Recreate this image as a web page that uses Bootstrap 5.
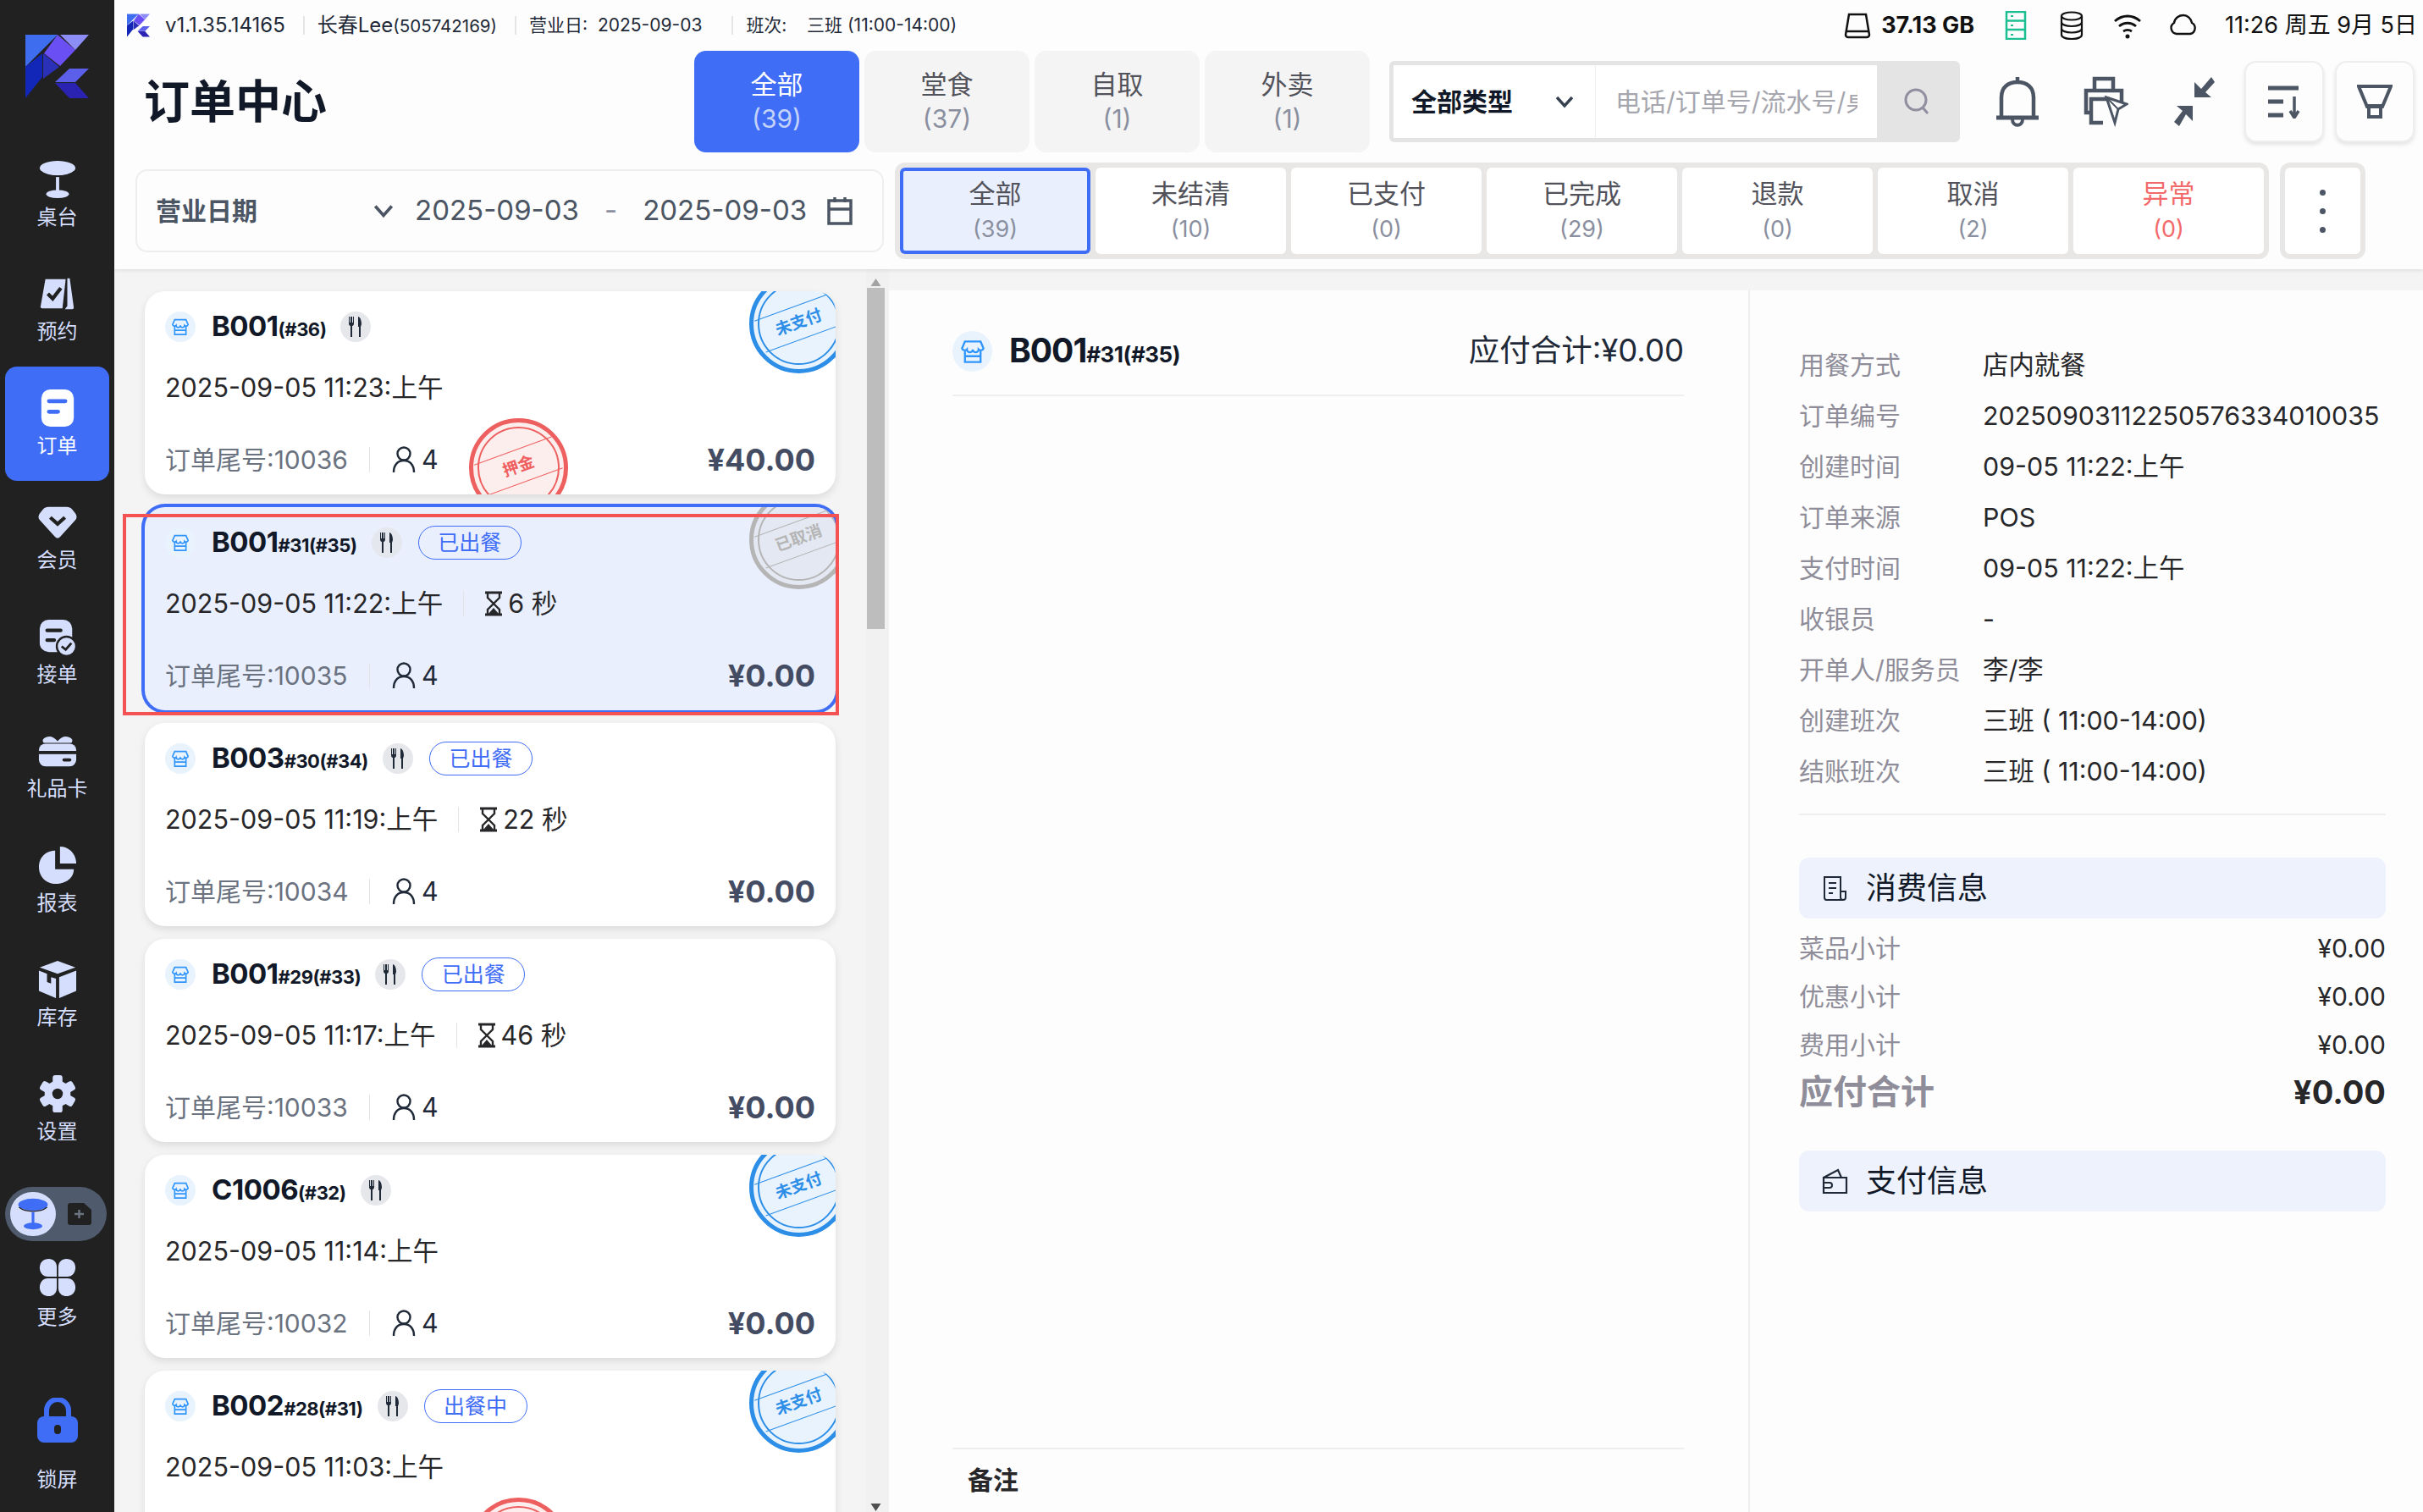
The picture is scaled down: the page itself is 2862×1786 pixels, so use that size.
<!DOCTYPE html>
<html lang="zh-CN">
<head>
<meta charset="UTF-8">
<title>订单中心</title>
<link href="https://cdn.jsdelivr.net/npm/bootstrap@5.3.0/dist/css/bootstrap.min.css" rel="stylesheet">
<style>
html, body { height: 1786px; }
body { width: 2862px; overflow: hidden; background: #f4f4f4; font-family: Inter, "Noto Sans CJK SC", sans-serif; color: #27272a; }

/* left rail */
.rail { width: 135px; height: 1786px; background: #212121; color: #d5defc; flex: none; padding-top: 41px; }
.rail-logo { width: 75px; height: 75px; margin: 0 0 47px 30px; display: block; }
.rail-item { width: 123px; height: 135px; margin-left: 6px; border-radius: 14px; padding-top: 26px; font-size: 24px; line-height: 30px; }
.rail-item svg { width: 46px; height: 46px; display: block; margin-bottom: 7px; flex: none; }
.rail-item.is-on { background: #3f6df6; color: #fff; }
.rail-switch { width: 120px; height: 64px; margin: 24px 0 0 6px; border-radius: 32px; background: #4f5b6d; padding: 6px; }
.rail-knob { width: 54px; height: 52px; border-radius: 26px; background: #d5defc; color: #3f6df6; }
.rail-knob svg { width: 38px; height: 38px; }
.rail-doc { width: 30px; height: 28px; margin-left: 13px; }
.rail-item.is-more { height: 107px; padding-top: 20px; }
.rail-item.is-more svg { margin-bottom: 9px; }
.rail-lock { padding-top: 0; margin-top: 78px; color: #3f6df6; height: auto; }
.rail-item.rail-lock svg { width: 52px; height: 54px; margin-bottom: 28px; }
.rail-lock span { color: #d5defc; }

/* header */
.top-area { background: #fdfdfd; height: 318px; box-shadow: 0 2px 4px rgba(0,0,0,.08); position: relative; z-index: 2; }
.status-strip { height: 60px; padding: 0 7px 0 15px; font-size: 21px; color: #1f2937; white-space: nowrap; }
.status-strip .logo-mini { width: 27px; height: 28px; margin-right: 18px; }
.strip-sep { width: 2px; height: 22px; background: #e5e5e5; margin: 0 15px 0 21px; }
.strip-big { font-size: 24px; }
.strip-tiny { font-size: 20.5px; }
.strip-date { margin-right: 14px; }
.strip-right { font-size: 27px; color: #111; }
.strip-right svg { height: 34px; width: 34px; }
.strip-disk { font-weight: 700; margin-left: 11px; }
.strip-gap { margin-left: 32px; }
.tool-row { height: 120px; padding-left: 25px; }
.page-title { width: 660px; padding: 2px 0 0 10px; font-size: 54px; font-weight: 700; color: #111827; line-height: 1; }
.kind-tab { width: 195px; height: 120px; margin-right: 6px; padding: 0; border: 0; border-radius: 14px; background: #f4f4f4; color: #52525b; font-size: 31px; line-height: 41px; }
.kind-tab small { display: block; font-size: 30px; color: #8a8f9f; }
.kind-tab.is-on { background: #3f6df6; color: #fff; }
.kind-tab.is-on small { color: #c5d3fb; }
.search-box { width: 674px; height: 96px; margin-left: 17px; border: 5px solid #e5e4e4; border-radius: 6px; background: #fff; flex-wrap: nowrap; }
.search-kind { width: 239px; padding: 0 0 0 21px; border: 0; border-right: 1px solid #eee; border-radius: 0; background: #fff; font-size: 30px; font-weight: 700; color: #111827; }
.search-kind svg { width: 24px; height: 24px; margin-right: 24px; color: #374151; }
.search-field { padding: 0 24px; border: 0; border-radius: 0; font-size: 30px; color: #333; background: #fff; box-shadow: none; }
.search-field::placeholder { color: #a6a6ae; }
.search-go { width: 93px; border: 0; padding: 0; border-radius: 0; background: #e5e4e4; color: #8f8fa0; }
.search-go svg { width: 36px; height: 36px; }
.tool-icon { width: 104px; color: #4b5563; }
.tool-icon svg { width: 54px; height: 62px; }
.tool-square { width: 94px; height: 96px; padding: 0; background: #fdfdfd; border: 2px solid #eee; border-radius: 14px; box-shadow: 0 3px 5px rgba(0,0,0,.1); color: #4b5563; }
.tool-square svg { width: 42px; height: 40px; }
.tool-gap { margin-left: 13px; }
.tool-icon + .tool-gap { margin-left: 8px; }
.filter-row { margin-top: 12px; padding-left: 25px; height: 114px; }
.date-box { width: 884px; height: 98px; border: 2px solid #eeeeee; border-radius: 14px; padding: 0 22px 0 22px; color: #4b5563; font-size: 33px; margin-right: 13px; white-space: nowrap; }
.date-box b { width: 256px; font-size: 30px; font-weight: 700; flex: none; }
.date-box .date-arrow { width: 26px; height: 26px; margin-right: 24px; flex: none; }
.date-box .date-cal { width: 34px; height: 34px; margin-left: 22px; flex: none; }
.date-dash { margin: 0 30px; color: #8a8f9f; }
.state-wrap { height: 114px; padding: 6px; gap: 6px; border-radius: 12px; background: #e8e7e6; }
.state-tab { width: 225px; height: 102px; padding: 2px 0 0; border: 0; border-radius: 6px; background: #fff; font-size: 31px; line-height: 42px; color: #52525b; }
.state-tab small { display: block; font-size: 27px; color: #8a8f9f; }
.state-tab.is-on { background: #e9effd; box-shadow: inset 0 0 0 4px #3f6df6; }
.state-tab.is-bad, .state-tab.is-bad small { color: #f36a6a; }
.state-more { margin-left: 13px; padding: 6px; background: #e8e7e6; border-radius: 12px; width: 101px; }
.state-more span { border-radius: 6px; background: #fff; height: 102px; }
.state-more i { display: block; width: 7px; height: 7px; border-radius: 50%; background: #4b5563; margin: 7.5px 0; }

/* order list */
.lower-area { height: 1468px; overflow: hidden; }
.order-col { width: 888px; padding: 26px 36px 0 36px; }
.order-tile { height: 240px; margin-bottom: 15px; border: 0; border-radius: 24px; box-shadow: 0 4px 10px rgba(0,0,0,.1); padding: 24px; background: #fff; overflow: hidden; font-size: 30.5px; }
.tile-wrap { position: relative; }
.order-tile.is-picked { background: #e9effd; box-shadow: 0 0 0 4px #3f6df6; }
.red-frame { position: absolute; left: -26px; top: 8px; width: 846px; height: 238px; border: 4px solid #f55353; z-index: 3; pointer-events: none; }
.tile-head { height: 36px; }
.shop-dot { width: 36px; height: 36px; border-radius: 50%; background: #e8f3fe; color: #3095fb; margin-right: 19px; }
.shop-dot svg { width: 20px; height: 22px; }
.tile-no { font-size: 33px; font-weight: 700; color: #111827; letter-spacing: -.5px; white-space: nowrap; }
.tile-no small { font-size: 22px; font-weight: 700; letter-spacing: -.5px; }
.fork-dot { width: 36px; height: 36px; border-radius: 50%; background: #e5e7eb; color: #1f2937; margin-left: 17px; flex: none; }
.fork-dot svg { width: 20px; height: 26px; }
.is-picked .fork-dot { background: #e5e7ee; }
.meal-chip { height: 40px; width: 122px; margin-left: 19px; border: 1.5px solid #3f6df6; border-radius: 20px; color: #3f6df6; font-size: 25px; line-height: 1; }
.tile-time { margin-top: 34px; height: 40px; line-height: 40px; color: #27272a; white-space: nowrap; }
.tile-sep { width: 1px; height: 30px; background: #e3e4e8; margin: 0 26px 0 26px; }
.tile-time .tile-sep { margin: 0 23px 0 24px; }
.tile-time svg { width: 24px; height: 30px; margin-right: 5px; }
.tile-foot { margin-top: 45px; height: 40px; line-height: 40px; }
.tile-tail { color: #6b7280; width: 215px; white-space: nowrap; font-size: 30px; }
.tile-people { color: #1f2937; }
.tile-people svg { width: 28px; height: 32px; margin-right: 7px; }
.tile-sum { font-size: 36px; font-weight: 700; color: #444c64; margin-left: auto; white-space: nowrap; }

/* stamps */
.stamp { position: absolute; width: 117px; height: 117px; border-radius: 50%; border: 5px solid; background: var(--stamp-bg); color: var(--stamp-ink); border-color: var(--stamp-ink); left: 714px; top: -20px; }
.stamp::before { content: ""; position: absolute; inset: 5px; border: 2px solid var(--stamp-ink); border-radius: 50%; }
.stamp span { position: absolute; left: 5px; top: 32px; width: 97px; height: 40px; line-height: 37px; transform: rotate(-20deg); border-top: 1.5px solid var(--stamp-ink); border-bottom: 1.5px solid var(--stamp-ink); text-align: center; font-size: 19px; font-weight: 700; }
.stamp-blue { --stamp-ink: #2d8ee8; --stamp-bg: #e8f3fd; }
.stamp-red { --stamp-ink: #ee5f5f; --stamp-bg: #fdeeee; left: 383px; top: 150px; }
.stamp-grey { --stamp-ink: #b5b5b5; --stamp-bg: #e4e8f2; }

/* scrollbar */
.rail-scroll { width: 27px; background: #f1f1f1; padding: 10px 0 0 1px; }
.rail-scroll svg { width: 21px; height: 12px; display: block; color: #a3a3a3; }
.rail-thumb { width: 21px; height: 403px; background: #bdbdbd; }
.rail-scroll .rail-down { margin-top: auto; color: #505050; }

/* detail */
.detail-col { width: 1015px; margin-top: 25px; padding: 0 76px 0 75px; background: #fdfdfd; }
.detail-head { height: 125px; padding-top: 20px; border-bottom: 2px solid #eeeeee; }
.detail-dot { width: 47px; height: 48px; border-radius: 50%; background: #e8f3fe; color: #3095fb; margin-right: 20px; }
.detail-dot svg { width: 28px; height: 30px; }
.detail-no { font-size: 39px; font-weight: 700; color: #111827; letter-spacing: -1px; }
.detail-no small { font-size: 26px; font-weight: 700; letter-spacing: -.5px; }
.detail-due { font-size: 36.5px; color: #1f2937; margin-left: auto; }
.detail-note { margin-top: auto; height: 76px; border-top: 2px solid #eeeeee; padding-left: 18px; font-size: 30px; font-weight: 700; color: #27272a; line-height: 72px; }

/* info */
.info-col { width: 797px; margin-top: 25px; padding: 58px 44px 0 58px; background: #fdfdfd; border-left: 2px solid #eeeeee; }
.info-line { height: 60px; font-size: 30.4px; line-height: 60px; white-space: nowrap; }
.info-line span:first-child { width: 217px; color: #8f8d99; font-size: 30px; }
.info-line span:last-child { color: #27272a; }
.info-rule { height: 2px; background: #eeeeee; margin: 20px 0 50px; }
.info-band { height: 72px; border-radius: 12px; background: #eef2fd; padding-left: 26px; font-size: 36px; color: #111827; }
.info-band svg { width: 33px; height: 33px; margin-right: 20px; }
.sum-line { height: 57px; font-size: 30px; color: #27272a; }
.sum-line span:first-child { color: #8f8d99; }
.sum-first { margin-top: 7px; }
.sum-total { height: 54px; font-size: 38px; font-weight: 700; margin-bottom: 42px; }
.sum-total span:first-child { font-size: 40px; }
</style>
</head>
<body class="d-flex">

<!-- icon sprite -->
<svg width="0" height="0" class="position-absolute">
  <defs>
    <symbol id="i-logo" viewBox="0 0 75 75">
      <polygon points="0,0 38,0 0,38" fill="#3f6df0"/>
      <polygon points="22,22 38,0 59,18 41,37" fill="#6a4ff5"/>
      <polygon points="41,0 75,0 59,18" fill="#8d8df8"/>
      <polygon points="0,38 20,22 20,50 0,75" fill="#1227b8"/>
      <polygon points="21,22 40,38 21,52" fill="#2b30b8"/>
      <polygon points="52,40 75,40 59,56 35,56" fill="#5b5fea"/>
      <polygon points="35,57 59,57 75,75 52,75" fill="#2a22b0"/>
    </symbol>
    <symbol id="i-table" viewBox="0 0 48 48">
      <ellipse cx="24" cy="10" rx="22" ry="9" fill="currentColor"/>
      <path d="M3 14c5 4 13 6 21 6s16-2 21-6" fill="none" stroke="#212121" stroke-width="1.5"/>
      <rect x="22" y="21" width="4" height="17" fill="currentColor"/>
      <ellipse cx="24" cy="42" rx="14" ry="5" fill="currentColor"/>
    </symbol>
    <symbol id="i-book" viewBox="0 0 48 48">
      <path d="M7 4h25l-4 36H3a2 2 0 0 1-2-2z" fill="currentColor" transform="translate(2 2)"/>
      <path d="M36 5h3l5 36a2 2 0 0 1-2 2h-9l3-4z" fill="currentColor"/>
      <path d="M12 24l6 6 10-13" fill="none" stroke="#212121" stroke-width="4.5"/>
    </symbol>
    <symbol id="i-order" viewBox="0 0 48 48">
      <rect x="4" y="1" width="40" height="46" rx="11" fill="#fff"/>
      <rect x="11" y="13" width="25" height="5" rx="2.5" fill="#3f6df6"/>
      <rect x="11" y="26" width="16" height="5" rx="2.5" fill="#3f6df6"/>
    </symbol>
    <symbol id="i-member" viewBox="0 0 48 48">
      <path d="M13 5h22c3 0 5 1 7 3l4 5c2 3 2 6 0 8L27 42c-2 2-4 2-6 0L2 21c-2-2-2-5 0-8l4-5c2-2 4-3 7-3z" fill="currentColor"/>
      <path d="M15 18l9 8 9-8" fill="none" stroke="#212121" stroke-width="4.5"/>
    </symbol>
    <symbol id="i-take" viewBox="0 0 48 48">
      <rect x="2" y="3" width="40" height="40" rx="11" fill="currentColor"/>
      <rect x="9" y="14" width="21" height="4.5" rx="2" fill="#212121"/>
      <rect x="9" y="26" width="13" height="4.5" rx="2" fill="#212121"/>
      <circle cx="35" cy="36" r="12" fill="currentColor" stroke="#212121" stroke-width="2.5"/>
      <path d="M29 36l5 4 7-8" fill="none" stroke="#212121" stroke-width="3"/>
    </symbol>
    <symbol id="i-gift" viewBox="0 0 48 48">
      <path d="M10 7c5-2 10 0 14 5 4-5 9-7 14-5 5 2 5 5 3 7h-34c-2-2-2-5 3-7z" fill="currentColor"/>
      <rect x="1" y="15" width="46" height="28" rx="8" fill="currentColor"/>
      <rect x="1" y="24" width="46" height="4" fill="#212121"/>
      <rect x="30" y="33" width="11" height="4" rx="2" fill="#212121"/>
    </symbol>
    <symbol id="i-pie" viewBox="0 0 48 48">
      <path d="M21 6v23h23c0 11-10 18-22 18C10 47 1 38 1 26S10 6 21 6z" fill="currentColor"/>
      <path d="M27 1c11 0 20 9 20 21H27z" fill="currentColor"/>
    </symbol>
    <symbol id="i-box" viewBox="0 0 48 48">
      <path d="M24 1l22 8-22 8L2 9z" fill="currentColor"/>
      <path d="M1 13l10 4v10l5 2v-8l6 2v24L1 38z" fill="currentColor"/>
      <path d="M47 13L26 21v26l21-9z" fill="currentColor"/>
    </symbol>
    <symbol id="i-gear" viewBox="-24 -24 48 48">
      <g fill="currentColor">
        <circle r="16"/>
        <rect x="-6" y="-23" width="12" height="46" rx="3"/>
        <rect x="-6" y="-23" width="12" height="46" rx="3" transform="rotate(60)"/>
        <rect x="-6" y="-23" width="12" height="46" rx="3" transform="rotate(120)"/>
      </g>
      <circle r="6.5" fill="#212121"/>
    </symbol>
    <symbol id="i-clover" viewBox="0 0 48 48">
      <g fill="currentColor">
        <path d="M2 12C2 5 7 1 13 1s10 4 10 10v12H12C6 23 2 18 2 12z"/>
        <path d="M46 12c0-7-5-11-11-11S25 5 25 11v12h11c6 0 10-5 10-11z"/>
        <path d="M2 36c0 7 5 11 11 11s10-4 10-10V25H12C6 25 2 30 2 36z"/>
        <path d="M46 36c0 7-5 11-11 11s-10-4-10-10V25h11c6 0 10 5 10 11z"/>
      </g>
    </symbol>
    <symbol id="i-lock" viewBox="0 0 50 54">
      <path d="M12 24v-9a13 13 0 0 1 26 0v9" fill="none" stroke="currentColor" stroke-width="6"/>
      <rect x="1" y="22" width="48" height="31" rx="8" fill="currentColor"/>
      <rect x="21" y="32" width="8" height="11" rx="4" fill="#212121"/>
    </symbol>
    <symbol id="i-shop" viewBox="0 0 24 26">
      <path d="M4 3h16l3 7a3 3 0 0 1-5 1 3 3 0 0 1-6 0 3 3 0 0 1-6 0 3 3 0 0 1-5-1z" fill="none" stroke="currentColor" stroke-width="2"/>
      <path d="M4 13v11h16V13M4 18h16" fill="none" stroke="currentColor" stroke-width="2"/>
    </symbol>
    <symbol id="i-fork" viewBox="0 0 20 26">
      <path d="M2 1v8c0 2 1 3 2 3v13h2V12c1 0 2-1 2-3V1H7v7H6V1H4v7H3V1z" fill="currentColor"/>
      <path d="M13 1c3 1 4 5 4 9l-1 3v12h-2V13h-1z" fill="currentColor"/>
    </symbol>
    <symbol id="i-user" viewBox="0 0 28 32">
      <circle cx="14" cy="9" r="7.5" fill="none" stroke="currentColor" stroke-width="2.4"/>
      <path d="M2 31c0-9 5-14 12-14s12 5 12 14" fill="none" stroke="currentColor" stroke-width="2.4"/>
    </symbol>
    <symbol id="i-glass" viewBox="0 0 24 30">
      <path d="M2 2h20M2 28h20" stroke="currentColor" stroke-width="3"/>
      <path d="M5 2v6l7 7-7 7v6M19 2v6l-7 7 7 7v6" fill="none" stroke="currentColor" stroke-width="2.4"/>
      <path d="M6 27l6-7 6 7z" fill="currentColor"/>
    </symbol>
    <symbol id="i-chev" viewBox="0 0 24 24">
      <path d="M3 7l9 10 9-10" fill="none" stroke="currentColor" stroke-width="3.4"/>
    </symbol>
  </defs>
</svg>

<!-- left rail -->
<aside class="rail d-flex flex-column">
  <svg class="rail-logo"><use href="#i-logo"/></svg>
  <div class="rail-item d-flex flex-column align-items-center"><svg><use href="#i-table"/></svg><span>桌台</span></div>
  <div class="rail-item d-flex flex-column align-items-center"><svg><use href="#i-book"/></svg><span>预约</span></div>
  <div class="rail-item is-on d-flex flex-column align-items-center"><svg><use href="#i-order"/></svg><span>订单</span></div>
  <div class="rail-item d-flex flex-column align-items-center"><svg><use href="#i-member"/></svg><span>会员</span></div>
  <div class="rail-item d-flex flex-column align-items-center"><svg><use href="#i-take"/></svg><span>接单</span></div>
  <div class="rail-item d-flex flex-column align-items-center"><svg><use href="#i-gift"/></svg><span>礼品卡</span></div>
  <div class="rail-item d-flex flex-column align-items-center"><svg><use href="#i-pie"/></svg><span>报表</span></div>
  <div class="rail-item d-flex flex-column align-items-center"><svg><use href="#i-box"/></svg><span>库存</span></div>
  <div class="rail-item d-flex flex-column align-items-center"><svg><use href="#i-gear"/></svg><span>设置</span></div>
  <div class="rail-switch d-flex align-items-center">
    <div class="rail-knob d-flex align-items-center justify-content-center"><svg><use href="#i-table"/></svg></div>
    <svg class="rail-doc" viewBox="0 0 30 28"><path d="M4 1h16l9 8v15a3 3 0 0 1-3 3H4a3 3 0 0 1-3-3V4a3 3 0 0 1 3-3z" fill="#212121"/><path d="M9 14h11M14.500 9v10" stroke="#6b7280" stroke-width="2.500"/></svg>
  </div>
  <div class="rail-item is-more d-flex flex-column align-items-center"><svg><use href="#i-clover"/></svg><span>更多</span></div>
  <div class="rail-item rail-lock d-flex flex-column align-items-center"><svg><use href="#i-lock"/></svg><span>锁屏</span></div>
</aside>

<div class="flex-grow-1 d-flex flex-column">

  <!-- header -->
  <header class="top-area">
    <div class="status-strip d-flex align-items-center">
      <svg class="logo-mini"><use href="#i-logo"/></svg>
      <span class="strip-big">v1.1.35.14165</span><i class="strip-sep"></i>
      <span class="strip-big">长春Lee<span class="strip-tiny">(505742169)</span></span><i class="strip-sep"></i>
      <span class="strip-date">营业日:&nbsp;&nbsp;2025-09-03</span><i class="strip-sep"></i>
      <span>班次:&nbsp;&nbsp;&nbsp;&nbsp;三班 (11:00-14:00)</span>
      <div class="strip-right ms-auto d-flex align-items-center">
        <svg viewBox="0 0 34 34"><path d="M7 4h20l4 24a3 3 0 0 1-3 3H6a3 3 0 0 1-3-3z" fill="none" stroke="#111" stroke-width="2.500"/><path d="M3 24h28" stroke="#111" stroke-width="2.500"/></svg>
        <span class="strip-disk">37.13 GB</span>
        <svg class="strip-gap" viewBox="0 0 34 34"><rect x="6" y="1" width="22" height="32" fill="none" stroke="#1cbf91" stroke-width="2.500"/><path d="M6 11.500h22M6 22h22" stroke="#1cbf91" stroke-width="2.500"/><path d="M11 6h3M11 17h3M11 28h3" stroke="#1cbf91" stroke-width="2"/></svg>
        <svg class="strip-gap" viewBox="0 0 34 34"><ellipse cx="17" cy="6" rx="12" ry="4.500" fill="none" stroke="#111" stroke-width="2.200"/><path d="M5 6v22c0 3 5 5 12 5s12-2 12-5V6M5 13c0 3 5 5 12 5s12-2 12-5M5 20.500c0 3 5 5 12 5s12-2 12-5" fill="none" stroke="#111" stroke-width="2.200"/></svg>
        <svg class="strip-gap" viewBox="0 0 34 34"><path d="M2 12c9-8 21-8 30 0M7 18c6-5 14-5 20 0M12 24c3-2 7-2 10 0" fill="none" stroke="#111" stroke-width="2.800"/><circle cx="17" cy="30" r="2.500" fill="#111"/></svg>
        <svg class="strip-gap" viewBox="0 0 34 34"><path d="M9 27a7 7 0 0 1-3-13c1-6 6-9 11-9s9 4 10 9a7 7 0 0 1-2 13z" fill="none" stroke="#111" stroke-width="2.400"/></svg>
        <span class="strip-gap">11:26 周五 9月 5日</span>
      </div>
    </div>

    <div class="tool-row d-flex align-items-center">
      <div class="page-title">订单中心</div>
      <button class="btn kind-tab is-on">全部<small>(39)</small></button>
      <button class="btn kind-tab">堂食<small>(37)</small></button>
      <button class="btn kind-tab">自取<small>(1)</small></button>
      <button class="btn kind-tab">外卖<small>(1)</small></button>
      <div class="input-group search-box">
        <button class="btn search-kind d-flex align-items-center justify-content-between">全部类型<svg><use href="#i-chev"/></svg></button>
        <input type="text" class="form-control search-field" placeholder="电话/订单号/流水号/桌台号">
        <button class="btn search-go"><svg viewBox="0 0 36 36"><circle cx="17" cy="16" r="12" fill="none" stroke="currentColor" stroke-width="3"/><path d="M25 25l6 7" stroke="currentColor" stroke-width="3"/></svg></button>
      </div>
      <div class="tool-icon d-flex justify-content-center ms-3">
        <svg viewBox="0 0 54 62"><path d="M27 2v6M8 50V26C8 14 16 8 27 8s19 6 19 18v24" fill="none" stroke="currentColor" stroke-width="4.500"/><path d="M2 50h50" stroke="currentColor" stroke-width="5"/><path d="M21 52c0 9 12 9 12 0" fill="none" stroke="currentColor" stroke-width="4"/></svg>
      </div>
      <div class="tool-icon d-flex justify-content-center">
        <svg viewBox="0 0 54 62"><path d="M14 16V4h22v12M8 44H4V18h42v14M10 44V28h22M10 44v12h14" fill="none" stroke="currentColor" stroke-width="4.500"/><path d="M28 26l24 8-10 6-4 16z" fill="#fff" stroke="currentColor" stroke-width="3"/><path d="M28 26l14 14" stroke="currentColor" stroke-width="2"/></svg>
      </div>
      <div class="tool-icon d-flex justify-content-center">
        <svg viewBox="0 0 54 62"><path d="M28 26V8l8 8L48 2l4 6-11 12 7 6zM26 36v18l-8-8-8 14-6-5 10-13-7-6z" fill="currentColor"/></svg>
      </div>
      <button class="btn tool-square tool-gap d-flex align-items-center justify-content-center">
        <svg viewBox="0 0 42 40"><path d="M2 4h36M2 20h18M2 36h18" stroke="currentColor" stroke-width="5"/><path d="M33 14v24M28 31l5 8 5-8" fill="none" stroke="currentColor" stroke-width="3.500"/></svg>
      </button>
      <button class="btn tool-square tool-gap d-flex align-items-center justify-content-center">
        <svg viewBox="0 0 42 40"><path d="M2 2h38l-10 24H12zM14 25h14v13H14z" fill="none" stroke="currentColor" stroke-width="4"/></svg>
      </button>
    </div>

    <div class="filter-row d-flex align-items-center">
      <div class="date-box d-flex align-items-center">
        <b>营业日期</b>
        <svg class="date-arrow"><use href="#i-chev"/></svg>
        <span>2025-09-03</span><span class="date-dash">-</span><span>2025-09-03</span>
        <svg class="date-cal" viewBox="0 0 34 34"><path d="M4 5h26v27H4zM4 15h26M11 1v6M23 1v6" fill="none" stroke="currentColor" stroke-width="3.500"/></svg>
      </div>
      <div class="state-wrap d-flex">
        <button class="btn state-tab is-on">全部<small>(39)</small></button>
        <button class="btn state-tab">未结清<small>(10)</small></button>
        <button class="btn state-tab">已支付<small>(0)</small></button>
        <button class="btn state-tab">已完成<small>(29)</small></button>
        <button class="btn state-tab">退款<small>(0)</small></button>
        <button class="btn state-tab">取消<small>(2)</small></button>
        <button class="btn state-tab is-bad">异常<small>(0)</small></button>
      </div>
      <div class="state-more">
        <span class="d-flex flex-column align-items-center justify-content-center"><i></i><i></i><i></i></span>
      </div>
    </div>
  </header>

  <div class="lower-area d-flex">
    <!-- order list -->
    <div class="order-col">

      <div class="card order-tile">
        <div class="tile-head d-flex align-items-center"><span class="shop-dot d-flex align-items-center justify-content-center"><svg><use href="#i-shop"/></svg></span><span class="tile-no">B001<small>(#36)</small></span><span class="fork-dot d-flex align-items-center justify-content-center"><svg><use href="#i-fork"/></svg></span></div>
        <div class="tile-time d-flex align-items-center">2025-09-05 11:23:上午</div>
        <div class="tile-foot d-flex align-items-center"><span class="tile-tail">订单尾号:10036</span><i class="tile-sep"></i><span class="tile-people d-flex align-items-center"><svg><use href="#i-user"/></svg>4</span><span class="tile-sum">¥40.00</span></div>
        <div class="stamp stamp-blue"><span>未支付</span></div>
        <div class="stamp stamp-red"><span>押金</span></div>
      </div>

      <div class="tile-wrap">
        <div class="card order-tile is-picked">
          <div class="tile-head d-flex align-items-center"><span class="shop-dot d-flex align-items-center justify-content-center"><svg><use href="#i-shop"/></svg></span><span class="tile-no">B001<small>#31(#35)</small></span><span class="fork-dot d-flex align-items-center justify-content-center"><svg><use href="#i-fork"/></svg></span><span class="meal-chip d-flex align-items-center justify-content-center">已出餐</span></div>
          <div class="tile-time d-flex align-items-center">2025-09-05 11:22:上午<i class="tile-sep"></i><svg><use href="#i-glass"/></svg>6 秒</div>
          <div class="tile-foot d-flex align-items-center"><span class="tile-tail">订单尾号:10035</span><i class="tile-sep"></i><span class="tile-people d-flex align-items-center"><svg><use href="#i-user"/></svg>4</span><span class="tile-sum">¥0.00</span></div>
          <div class="stamp stamp-grey"><span>已取消</span></div>
        </div>
        <div class="red-frame"></div>
      </div>

      <div class="card order-tile">
        <div class="tile-head d-flex align-items-center"><span class="shop-dot d-flex align-items-center justify-content-center"><svg><use href="#i-shop"/></svg></span><span class="tile-no">B003<small>#30(#34)</small></span><span class="fork-dot d-flex align-items-center justify-content-center"><svg><use href="#i-fork"/></svg></span><span class="meal-chip d-flex align-items-center justify-content-center">已出餐</span></div>
        <div class="tile-time d-flex align-items-center">2025-09-05 11:19:上午<i class="tile-sep"></i><svg><use href="#i-glass"/></svg>22 秒</div>
        <div class="tile-foot d-flex align-items-center"><span class="tile-tail">订单尾号:10034</span><i class="tile-sep"></i><span class="tile-people d-flex align-items-center"><svg><use href="#i-user"/></svg>4</span><span class="tile-sum">¥0.00</span></div>
      </div>

      <div class="card order-tile">
        <div class="tile-head d-flex align-items-center"><span class="shop-dot d-flex align-items-center justify-content-center"><svg><use href="#i-shop"/></svg></span><span class="tile-no">B001<small>#29(#33)</small></span><span class="fork-dot d-flex align-items-center justify-content-center"><svg><use href="#i-fork"/></svg></span><span class="meal-chip d-flex align-items-center justify-content-center">已出餐</span></div>
        <div class="tile-time d-flex align-items-center">2025-09-05 11:17:上午<i class="tile-sep"></i><svg><use href="#i-glass"/></svg>46 秒</div>
        <div class="tile-foot d-flex align-items-center"><span class="tile-tail">订单尾号:10033</span><i class="tile-sep"></i><span class="tile-people d-flex align-items-center"><svg><use href="#i-user"/></svg>4</span><span class="tile-sum">¥0.00</span></div>
      </div>

      <div class="card order-tile">
        <div class="tile-head d-flex align-items-center"><span class="shop-dot d-flex align-items-center justify-content-center"><svg><use href="#i-shop"/></svg></span><span class="tile-no">C1006<small>(#32)</small></span><span class="fork-dot d-flex align-items-center justify-content-center"><svg><use href="#i-fork"/></svg></span></div>
        <div class="tile-time d-flex align-items-center">2025-09-05 11:14:上午</div>
        <div class="tile-foot d-flex align-items-center"><span class="tile-tail">订单尾号:10032</span><i class="tile-sep"></i><span class="tile-people d-flex align-items-center"><svg><use href="#i-user"/></svg>4</span><span class="tile-sum">¥0.00</span></div>
        <div class="stamp stamp-blue"><span>未支付</span></div>
      </div>

      <div class="card order-tile">
        <div class="tile-head d-flex align-items-center"><span class="shop-dot d-flex align-items-center justify-content-center"><svg><use href="#i-shop"/></svg></span><span class="tile-no">B002<small>#28(#31)</small></span><span class="fork-dot d-flex align-items-center justify-content-center"><svg><use href="#i-fork"/></svg></span><span class="meal-chip d-flex align-items-center justify-content-center">出餐中</span></div>
        <div class="tile-time d-flex align-items-center">2025-09-05 11:03:上午</div>
        <div class="stamp stamp-blue"><span>未支付</span></div>
        <div class="stamp stamp-red"><span></span></div>
      </div>
    </div>

    <!-- scrollbar -->
    <div class="rail-scroll d-flex flex-column">
      <svg viewBox="0 0 21 12"><path d="M10.500 1l6 9h-12z" fill="currentColor"/></svg>
      <div class="rail-thumb"></div>
      <svg class="rail-down" viewBox="0 0 21 12"><path d="M4.500 2h12l-6 9z" fill="currentColor"/></svg>
    </div>

    <!-- detail -->
    <section class="detail-col d-flex flex-column">
      <div class="detail-head d-flex align-items-center">
        <span class="detail-dot d-flex align-items-center justify-content-center"><svg><use href="#i-shop"/></svg></span>
        <span class="detail-no">B001<small>#31(#35)</small></span>
        <span class="detail-due">应付合计:¥0.00</span>
      </div>
      <div class="detail-note">备注</div>
    </section>

    <!-- info -->
    <section class="info-col">
      <div class="info-line d-flex"><span>用餐方式</span><span>店内就餐</span></div>
      <div class="info-line d-flex"><span>订单编号</span><span>20250903112250576334010035</span></div>
      <div class="info-line d-flex"><span>创建时间</span><span>09-05 11:22:上午</span></div>
      <div class="info-line d-flex"><span>订单来源</span><span>POS</span></div>
      <div class="info-line d-flex"><span>支付时间</span><span>09-05 11:22:上午</span></div>
      <div class="info-line d-flex"><span>收银员</span><span>-</span></div>
      <div class="info-line d-flex"><span>开单人/服务员</span><span>李/李</span></div>
      <div class="info-line d-flex"><span>创建班次</span><span>三班 ( 11:00-14:00)</span></div>
      <div class="info-line d-flex"><span>结账班次</span><span>三班 ( 11:00-14:00)</span></div>
      <div class="info-rule"></div>
      <div class="info-band d-flex align-items-center">
        <svg viewBox="0 0 33 33"><path d="M26 30H6a3 3 0 0 1-2-3V3h19v24a3 3 0 0 0 6 0v-7h-6M9 10h9M9 16h9M9 22h5" fill="none" stroke="#1f2937" stroke-width="2"/></svg>消费信息
      </div>
      <div class="sum-line sum-first d-flex align-items-center justify-content-between"><span>菜品小计</span><span>¥0.00</span></div>
      <div class="sum-line d-flex align-items-center justify-content-between"><span>优惠小计</span><span>¥0.00</span></div>
      <div class="sum-line d-flex align-items-center justify-content-between"><span>费用小计</span><span>¥0.00</span></div>
      <div class="sum-line sum-total d-flex align-items-center justify-content-between"><span>应付合计</span><span>¥0.00</span></div>
      <div class="info-band d-flex align-items-center">
        <svg viewBox="0 0 33 33"><path d="M3 12h27v18H3zM3 12L20 3l4 9" fill="none" stroke="#1f2937" stroke-width="2.200"/><path d="M3 18h7a3 3 0 0 1 0 6H3" fill="none" stroke="#1f2937" stroke-width="2"/></svg>支付信息
      </div>
    </section>
  </div>
</div>

<script src="https://cdn.jsdelivr.net/npm/bootstrap@5.3.0/dist/js/bootstrap.bundle.min.js"></script>
</body>
</html>
